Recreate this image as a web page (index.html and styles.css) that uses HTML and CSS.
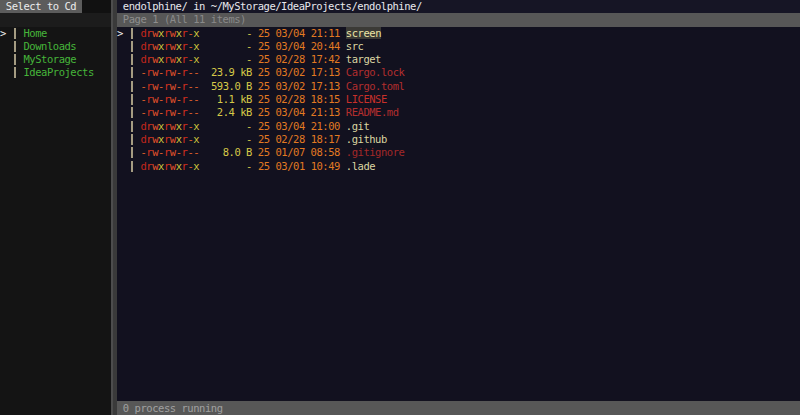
FILE: index.html
```html
<!DOCTYPE html>
<html lang="en">
<head>
    <meta charset="UTF-8">
    <meta name="viewport" content="width=device-width, initial-scale=1.0">
    <title>endolphine</title>
    <link rel="stylesheet" href="styles.css">
</head>
<body>
    <div class="screen">

        <!-- Left pane: cd picker -->
        <aside class="left">
            <div class="row title-row"><span class="title"> Select to Cd </span></div>
            <div class="row blank-row"></div>
            <div class="row"><span class="cur">&gt;</span> <span class="bar"></span> <span class="dir">Home</span></div>
            <div class="row">  <span class="bar"></span> <span class="dir">Downloads</span></div>
            <div class="row">  <span class="bar"></span> <span class="dir">MyStorage</span></div>
            <div class="row">  <span class="bar"></span> <span class="dir">IdeaProjects</span></div>
        </aside>

        <div class="sep"></div>

        <!-- Right pane: file list -->
        <main class="right">
            <div class="row path"> endolphine/ in ~/MyStorage/IdeaProjects/endolphine/</div>
            <div class="row page"> Page 1 <span class="dim">(All 11 items)</span></div>

            <div class="list">
                <div class="row"><span class="cur">&gt;</span> <span class="bar"></span> <span class="pd">d</span><span class="pr">r</span><span class="pw">w</span><span class="px">x</span><span class="pr">r</span><span class="pw">w</span><span class="px">x</span><span class="pr">r</span><span class="pn">-</span><span class="px">x</span> <span class="size">       -</span> <span class="date">25 03/04 21:11</span> <span class="name dirn sel">screen</span></div>
                <div class="row">  <span class="bar"></span> <span class="pd">d</span><span class="pr">r</span><span class="pw">w</span><span class="px">x</span><span class="pr">r</span><span class="pw">w</span><span class="px">x</span><span class="pr">r</span><span class="pn">-</span><span class="px">x</span> <span class="size">       -</span> <span class="date">25 03/04 20:44</span> <span class="name dirn">src</span></div>
                <div class="row">  <span class="bar"></span> <span class="pd">d</span><span class="pr">r</span><span class="pw">w</span><span class="px">x</span><span class="pr">r</span><span class="pw">w</span><span class="px">x</span><span class="pr">r</span><span class="pn">-</span><span class="px">x</span> <span class="size">       -</span> <span class="date">25 02/28 17:42</span> <span class="name dirn">target</span></div>
                <div class="row">  <span class="bar"></span> <span class="pn">-</span><span class="pr">r</span><span class="pw">w</span><span class="pn">-</span><span class="pr">r</span><span class="pw">w</span><span class="pn">-</span><span class="pr">r</span><span class="pn">--</span> <span class="size"> 23.9 kB</span> <span class="date">25 03/02 17:13</span> <span class="name file">Cargo.lock</span></div>
                <div class="row">  <span class="bar"></span> <span class="pn">-</span><span class="pr">r</span><span class="pw">w</span><span class="pn">-</span><span class="pr">r</span><span class="pw">w</span><span class="pn">-</span><span class="pr">r</span><span class="pn">--</span> <span class="size"> 593.0 B</span> <span class="date">25 03/02 17:13</span> <span class="name file">Cargo.toml</span></div>
                <div class="row">  <span class="bar"></span> <span class="pn">-</span><span class="pr">r</span><span class="pw">w</span><span class="pn">-</span><span class="pr">r</span><span class="pw">w</span><span class="pn">-</span><span class="pr">r</span><span class="pn">--</span> <span class="size">  1.1 kB</span> <span class="date">25 02/28 18:15</span> <span class="name file-red">LICENSE</span></div>
                <div class="row">  <span class="bar"></span> <span class="pn">-</span><span class="pr">r</span><span class="pw">w</span><span class="pn">-</span><span class="pr">r</span><span class="pw">w</span><span class="pn">-</span><span class="pr">r</span><span class="pn">--</span> <span class="size">  2.4 kB</span> <span class="date">25 03/04 21:13</span> <span class="name file">README.md</span></div>
                <div class="row">  <span class="bar"></span> <span class="pd">d</span><span class="pr">r</span><span class="pw">w</span><span class="px">x</span><span class="pr">r</span><span class="pw">w</span><span class="px">x</span><span class="pr">r</span><span class="pn">-</span><span class="px">x</span> <span class="size">       -</span> <span class="date">25 03/04 21:00</span> <span class="name dirn">.git</span></div>
                <div class="row">  <span class="bar"></span> <span class="pd">d</span><span class="pr">r</span><span class="pw">w</span><span class="px">x</span><span class="pr">r</span><span class="pw">w</span><span class="px">x</span><span class="pr">r</span><span class="pn">-</span><span class="px">x</span> <span class="size">       -</span> <span class="date">25 02/28 18:17</span> <span class="name dirn">.github</span></div>
                <div class="row">  <span class="bar"></span> <span class="pn">-</span><span class="pr">r</span><span class="pw">w</span><span class="pn">-</span><span class="pr">r</span><span class="pw">w</span><span class="pn">-</span><span class="pr">r</span><span class="pn">--</span> <span class="size">   8.0 B</span> <span class="date">25 01/07 08:58</span> <span class="name file-dark">.gitignore</span></div>
                <div class="row">  <span class="bar"></span> <span class="pd">d</span><span class="pr">r</span><span class="pw">w</span><span class="px">x</span><span class="pr">r</span><span class="pw">w</span><span class="px">x</span><span class="pr">r</span><span class="pn">-</span><span class="px">x</span> <span class="size">       -</span> <span class="date">25 03/01 10:49</span> <span class="name dirn">.lade</span></div>
            </div>

            <div class="row status"> 0 process running</div>
        </main>

    </div>
</body>
</html>
```

FILE: styles.css
```css
/* Terminal-ish base */
body {
    margin: 0;
    padding: 0;
    background-color: #12111f;
    font-family: 'DejaVu Sans Mono', 'Liberation Mono', monospace;
    font-size: 10.5px;
    letter-spacing: -0.46px;
    color: #e4e4e4;
}

.screen {
    display: flex;
    height: 415px;
    overflow: hidden;
}

.row {
    height: 13.3px;
    line-height: 13.3px;
    white-space: pre;
}

/* Left pane */
.left {
    width: 111px;
    background-color: #141414;
}

.title-row {
    background-color: #111;
}

.title {
    background-color: #5c5c5c;
    color: #ececec;
    display: inline-block;
    height: 13.3px;
}

.blank-row {
    background-color: #1c1c1c;
}

.dir {
    color: #46b63a;
}

.cur {
    color: #f0f0f0;
}

.bar {
    display: inline-block;
    width: 5.86px;
    height: 11px;
    vertical-align: -2px;
    position: relative;
}

.bar::before {
    content: "";
    position: absolute;
    left: 2px;
    top: 0;
    width: 2px;
    height: 100%;
    background-color: #a59c82;
}

/* Separator */
.sep {
    width: 6px;
    background-color: #3a3a3a;
    border-left: 2px solid #4d4d4d;
    box-sizing: border-box;
}

/* Right pane */
.right {
    flex: 1;
    display: flex;
    flex-direction: column;
    background-color: #12111f;
}

.path {
    background-color: #161525;
    color: #e8e8ee;
}

.page {
    background-color: #575757;
    color: #8e8e8e;
}

.page .dim {
    color: #8a8a8a;
}

.list {
    flex: 1;
}

.status {
    background-color: #575757;
    color: #a0a0a0;
    height: 14px;
    line-height: 14px;
}

/* Permission colours */
.pd { color: #c4261c; }
.pr { color: #d8301e; }
.pw { color: #e0502a; }
.px { color: #cfc63e; }
.pn { color: #e2602c; }

.size { color: #d6c948; }
.date { color: #e27a22; }

.dirn { color: #dcd6a2; }
.sel {
    background-color: #3b3a36;
    color: #ece4a4;
}
.file { color: #b22e2e; }
.file-red { color: #c8302a; }
.file-dark { color: #a42828; }
```
